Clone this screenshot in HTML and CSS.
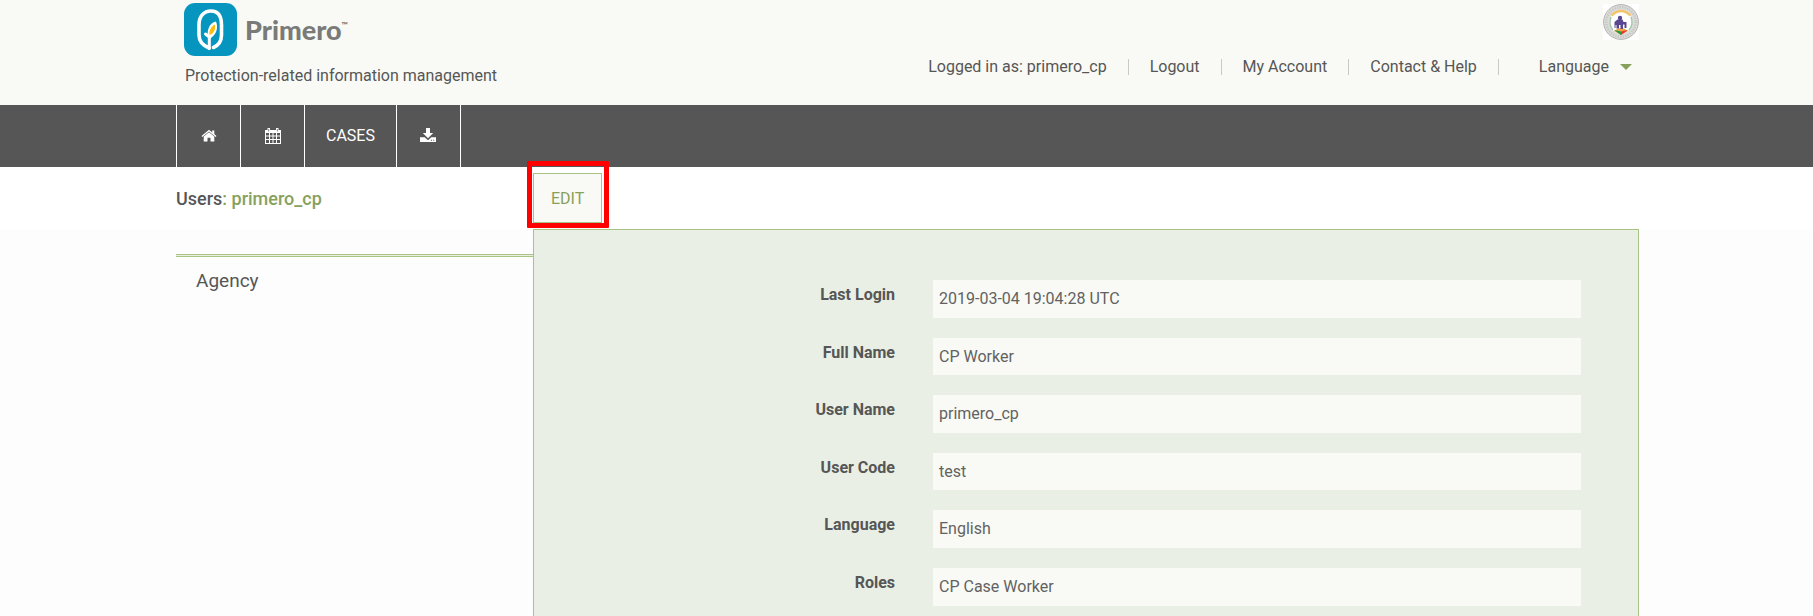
FILE: index.html
```html
<!DOCTYPE html>
<html lang="en">
<head>
<meta charset="utf-8">
<title>Primero - Users: primero_cp</title>
<link rel="stylesheet" href="styles.css">
</head>
<body>
<header class="site-header container">
  <div class="brand">
    <a class="brand-link" href="#">
      <svg class="brand-mark" viewBox="0 0 53 53" aria-hidden="true">
        <rect width="53" height="53" rx="11" fill="#0595bf"/>
        <path d="M25 45C18 42 15 37 15 32V22C15 13 20 8 27 8S37.500 13 37.500 22V32C37.500 38 35 42 29.500 44.500" fill="none" stroke="#fff" stroke-width="3.600" stroke-linecap="round"/>
        <path d="M25.300 45.500V34L21.500 31" fill="none" stroke="#fff" stroke-width="3" stroke-linecap="round"/>
        <path d="M24.500 36.500C22 28 25 20 32 18.500C35 26 31.500 33 24.500 36.500Z" fill="#fff"/>
        <path d="M25.500 32C25 27 27 23.500 30.800 21.500C32 26.500 30 30.500 25.500 32Z" fill="#f9be15"/>
      </svg>
      <span class="brand-name">Primero<sup class="brand-tm">™</sup></span>
    </a>
    <p class="tagline">Protection-related information management</p>
  </div>
  <div class="account">
    <svg class="seal" viewBox="0 0 36 36" role="img" aria-label="Agency seal">
      <rect width="36" height="36" fill="#fff"/>
      <circle cx="18" cy="18" r="14.500" fill="#fff" stroke="#dcdcda" stroke-width="6"/>
      <circle cx="18" cy="18" r="17.400" fill="none" stroke="#b4b4b1" stroke-width="1"/>
      <circle cx="18" cy="18" r="14.700" fill="none" stroke="#c4c4c1" stroke-width="2.500" stroke-dasharray="1.200 1.300"/>
      <path d="M8.500 11.500Q18 2.500 27.500 11.500" fill="none" stroke="#f5c469" stroke-width="2.500"/>
      <path d="M8 13Q5 20 10 26M28 13Q31 20 26 26" fill="none" stroke="#a5c9a8" stroke-width="1.500"/>
      <path d="M11 27Q18 21 25 27L18 31Z" fill="#f3a23d"/>
      <path d="M11 26L18 27.500V31Z" fill="#219b4a"/>
      <path d="M25 26L18 27.500V31Z" fill="#e4383d"/>
      <circle cx="17" cy="14" r="2.200" fill="#5a4790"/>
      <path d="M11.500 24V18L14.500 15.500H19.500L20.500 18H23.500V24H21.500V20.500H20V25H17.500V21H16V24.500H13.500V21H12.500V24Z" fill="#5a4790"/>
    </svg>
    <ul class="account-links">
      <li>Logged in as: primero_cp</li>
      <li><a href="#">Logout</a></li>
      <li><a href="#">My Account</a></li>
      <li><a href="#">Contact &amp; Help</a></li>
      <li class="language"><button class="language-button" type="button" aria-haspopup="true">Language</button></li>
    </ul>
  </div>
</header>

<nav class="main-nav container" aria-label="Main">
  <ul class="nav-list">
    <li><a href="#" aria-label="Home">
      <svg class="nav-icon" viewBox="0 0 16 16" aria-hidden="true"><path d="M8 4.200L13.300 8.500V13.400H9.500V9.800H6.500V13.400H2.700V8.500Z"/><path d="M.5 8L8 1.800L15.500 8L14.700 9L8 3.500L1.300 9Z"/><path d="M11.200 2.400H13.300V6.500L11.200 4.800Z"/></svg>
    </a></li>
    <li><a href="#" aria-label="Calendar">
      <svg class="nav-icon" viewBox="0 0 16 16" aria-hidden="true"><path fill-rule="evenodd" d="M0 2H2.500V0H5V2H11V0H13.500V2H16V16H0ZM1 5V7.500H4V5ZM5 5V7.500H7.500V5ZM8.500 5V7.500H11V5ZM12 5V7.500H15V5ZM1 8.500V11H4V8.500ZM5 8.500V11H7.500V8.500ZM8.500 8.500V11H11V8.500ZM12 8.500V11H15V8.500ZM1 12V15H4V12ZM5 12V15H7.500V12ZM8.500 12V15H11V12ZM12 12V15H15V12ZM3.400 1V3.500H4.100V1ZM11.900 1V3.500H12.600V1Z"/></svg>
    </a></li>
    <li><a href="#">CASES</a></li>
    <li><a href="#" aria-label="Exports">
      <svg class="nav-icon" viewBox="0 0 16 16" aria-hidden="true"><path d="M6 0H10V5H13.200L8 10.300L2.800 5H6Z"/><path fill-rule="evenodd" d="M0 9.200H4.700L8 12.200L11.300 9.200H16V14H0ZM11 11.700V12.700H12V11.700ZM13.200 11.700V12.700H14.200V11.700Z"/></svg>
    </a></li>
  </ul>
</nav>

<main class="page">
  <div class="page-bar container columns">
    <h1 class="page-title">Users<span class="page-user">: primero_cp</span></h1>
    <div class="actions">
      <span class="highlight"><a class="edit-button" href="#">EDIT</a></span>
    </div>
  </div>
  <div class="page-body container columns">
    <aside class="side">
      <ul class="side-tabs">
        <li><a href="#">Agency</a></li>
      </ul>
    </aside>
    <section class="panel">
      <dl class="details">
        <div class="detail"><dt>Last Login</dt><dd>2019-03-04 19:04:28 UTC</dd></div>
        <div class="detail"><dt>Full Name</dt><dd>CP Worker</dd></div>
        <div class="detail"><dt>User Name</dt><dd>primero_cp</dd></div>
        <div class="detail"><dt>User Code</dt><dd>test</dd></div>
        <div class="detail"><dt>Language</dt><dd>English</dd></div>
        <div class="detail"><dt>Roles</dt><dd>CP Case Worker</dd></div>
      </dl>
    </section>
  </div>
</main>
</body>
</html>
```
FILE: styles.css
```css
* {
  box-sizing: border-box;
}

body {
  margin: 0;
  min-height: 100vh;
  display: flex;
  flex-direction: column;
  background: #fff;
  color: #565656;
  font: 16px/20px Roboto, "Liberation Sans", sans-serif;
}

a {
  color: inherit;
  text-decoration: none;
}

ul,
dl,
dd,
p {
  margin: 0;
  padding: 0;
}

ul {
  list-style: none;
}

.container {
  padding-left: 176px;
  padding-right: 174px;
}

.columns {
  display: grid;
  grid-template-columns: 357fr 1106fr;
}

/* Header */
.site-header {
  display: flex;
  justify-content: space-between;
  min-height: 105px;
  background-color: #f9faf5;
}

.brand {
  padding: 3px 0 0 8px;
}

.brand-link {
  display: flex;
  align-items: center;
  gap: 8px;
}

.brand-mark {
  width: 53px;
  height: 53px;
}

.brand-name {
  color: #7a7a78;
  font: 900 27px/36px Lato, sans-serif;
}

.brand-tm {
  font-size: 8px;
  line-height: 8px;
  vertical-align: 12px;
}

.tagline {
  padding: 10px 0 0 1px;
}

.account {
  display: flex;
  flex-direction: column;
  align-items: flex-end;
  gap: 19px;
  padding-top: 4px;
}

.seal {
  width: 36px;
  height: 36px;
}

.account-links {
  display: flex;
  line-height: 16px;
}

.account-links li {
  padding: 0 21px;
  border-right: 1px solid #c9cac7;
}

.account-links .language {
  padding: 0 7px 0 40px;
  border-right: 0;
}

.language-button {
  display: flex;
  align-items: center;
  gap: 11px;
  padding: 0;
  border: 0;
  background: none;
  color: inherit;
  font: inherit;
}

.language-button::after {
  content: "";
  border: 6px solid transparent;
  border-top-color: #87a15c;
  border-bottom: 0;
}

/* Main navigation */
.main-nav {
  background-color: #565656;
  color: #fff;
}

.nav-list {
  display: flex;
}

.nav-list li {
  border-left: 1px solid #fff;
}

.nav-list li:last-child {
  border-right: 1px solid #fff;
}

.nav-list a {
  display: flex;
  align-items: center;
  justify-content: center;
  min-width: 63px;
  height: 62px;
  padding: 0 21px;
}

.nav-icon {
  width: 16px;
  height: 16px;
  fill: currentColor;
}

/* Page */
.page {
  flex: 1;
  display: flex;
  flex-direction: column;
}

.page-bar {
  min-height: 62px;
}

.page-title {
  margin: 0;
  padding-top: 20px;
  font-size: 18px;
  line-height: 24px;
  font-weight: 500;
}

.page-user {
  color: #87a15c;
}

.actions {
  padding-top: 6px;
}

.highlight {
  position: relative;
  display: inline-block;
}

.highlight::after {
  content: "";
  position: absolute;
  inset: -12px -7px -5px -6px;
  border: 5px solid #f00;
  border-radius: 1px;
  pointer-events: none;
}

.edit-button {
  display: block;
  padding: 15px 17px 13px;
  border: 1px solid #a9c482;
  background: #f9faf5;
  color: #87a15c;
}

.page-body {
  flex: 1;
  background-color: #fdfdfd;
}

.side {
  padding-top: 25px;
}

.side-tabs {
  border-top: 1px solid #a9c482;
}

.side-tabs li {
  border-top: 1px solid #e9efe4;
}

.side-tabs a {
  display: block;
  padding: 12px 20px;
  border-top: 1px solid #a9c482;
  font-size: 19px;
  line-height: 24px;
}

.panel {
  padding: 50px 57px 10px;
  border: 1px solid #a9c482;
  border-bottom: 0;
  background: #e9efe4;
}

.details {
  display: grid;
  gap: 20px;
}

.detail {
  display: grid;
  grid-template-columns: 304fr 648fr;
  column-gap: 38px;
  line-height: 1.1;
}

.detail dt {
  padding-top: 6px;
  font-weight: 700;
  text-align: right;
}

.detail dd {
  padding: 10px 6px;
  background: #f9faf5;
  color: #626262;
}
```
